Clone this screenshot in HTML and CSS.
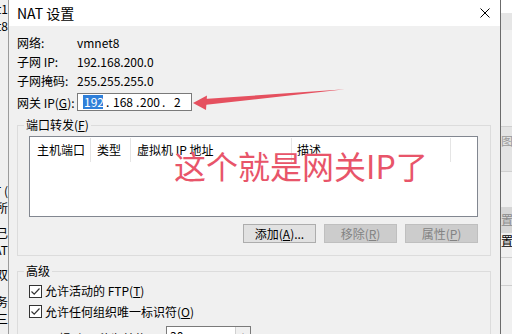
FILE: index.html
```html
<!DOCTYPE html>
<html lang="zh-CN">
<head>
    <meta charset="UTF-8">
    <title>NAT 设置</title>
    <link rel="stylesheet" href="styles.css">
</head>
<body>
    <div class="screen">
        <!-- window behind, left edge -->
        <div class="bg-left">
            <div class="frag top1"><span>vmnet1</span></div>
            <div class="frag"><span>vmnet8</span></div>
            <div class="frag mid1"><span>NAT (</span></div>
            <div class="frag"><span>连接所</span></div>
            <div class="frag mid2"><span>已</span></div>
            <div class="frag"><span>NAT</span></div>
            <div class="frag mid3"><span>双</span></div>
            <div class="frag mid4"><span>务</span></div>
            <div class="frag"><span>三</span></div>
        </div>

        <div class="dialog">
            <div class="titlebar">
                <span class="title">NAT 设置</span>
                <svg class="close" width="10" height="10" viewBox="0 0 10 10">
                    <path d="M0.5 0.5L9.5 9.5M9.5 0.5L0.5 9.5" stroke="#000" stroke-width="1" fill="none"/>
                </svg>
            </div>

            <div class="content">
                <div class="info-row"><span class="label">网络:</span><span>vmnet8</span></div>
                <div class="info-row"><span class="label">子网 IP:</span><span>192.168.200.0</span></div>
                <div class="info-row"><span class="label">子网掩码:</span><span>255.255.255.0</span></div>
                <div class="gw-row">
                    <span class="label">网关 IP(<u>G</u>):</span>
                    <div class="ip-box">
                        <span class="ip-seg sel">192</span>
                        <span class="ip-dot d1">.</span>
                        <span class="ip-seg s2">168</span>
                        <span class="ip-dot d2">.</span>
                        <span class="ip-seg s3">200</span>
                        <span class="ip-dot d3">.</span>
                        <span class="ip-seg s4">2</span>
                    </div>
                </div>

                <fieldset class="group forward">
                    <legend>端口转发(<u>F</u>)</legend>
                    <div class="list">
                        <div class="list-head">
                            <div class="col c1">主机端口</div>
                            <div class="col c2">类型</div>
                            <div class="col c3">虚拟机 IP 地址</div>
                            <div class="col c4">描述</div>
                        </div>
                    </div>
                    <div class="buttons">
                        <button class="btn">添加(<u>A</u>)...</button>
                        <button class="btn disabled">移除(<u>R</u>)</button>
                        <button class="btn disabled">属性(<u>P</u>)</button>
                    </div>
                </fieldset>

                <fieldset class="group advanced">
                    <legend>高级</legend>
                    <div class="check">
                        <span class="box"><svg width="11" height="11" viewBox="0 0 11 11"><path d="M1.5 5.5L4.2 8.2L9.5 2.5" stroke="#333" stroke-width="1.2" fill="none"/></svg></span>
                        <span>允许活动的 FTP(<u>T</u>)</span>
                    </div>
                    <div class="check second">
                        <span class="box"><svg width="11" height="11" viewBox="0 0 11 11"><path d="M1.5 5.5L4.2 8.2L9.5 2.5" stroke="#333" stroke-width="1.2" fill="none"/></svg></span>
                        <span>允许任何组织唯一标识符(<u>O</u>)</span>
                    </div>
                    <div class="udp-row">
                        <span class="udp-label">UDP 超时(以秒为单位)(<u>U</u>):</span>
                        <div class="spin-box">
                            <span>30</span>
                            <span class="spin-btn">▲</span>
                        </div>
                    </div>
                </fieldset>
            </div>
        </div>

        <!-- window behind, right edge -->
        <div class="bg-right">
            <div class="r-white"></div>
            <div class="r-box"></div>
            <div class="r-space"></div>
            <div class="r-field">图络</div>
            <div class="r-space2"></div>
            <div class="r-btn">置(U</div>
            <div class="r-text">置(S</div>
            <div class="r-line"></div>
            <div class="r-line low"></div>
        </div>

        <!-- red annotation drawn over the screenshot -->
        <svg class="arrow" width="512" height="334" viewBox="0 0 512 334">
            <polygon points="345,89.3 204,99 204,105" fill="#e5505f"/>
            <polygon points="193,103 207,95.5 206,110" fill="#e5505f"/>
        </svg>
        <div class="note">这个就是网关IP了</div>
    </div>
</body>
</html>
```

FILE: styles.css
```css
* {
    box-sizing: border-box;
}

body {
    margin: 0;
    width: 512px;
    height: 334px;
    overflow: hidden;
    font-family: "Noto Sans CJK SC", "Liberation Sans", sans-serif;
    font-size: 12px;
    color: #000;
    background: #f0f0f0;
}

.screen {
    display: flex;
    height: 334px;
    position: relative;
    overflow: hidden;
}

/* background window on the left */
.bg-left {
    width: 9px;
    flex-shrink: 0;
    border-right: 1px solid #9c9c9c;
    background: #f0f0f0;
    overflow: hidden;
}

.frag {
    display: flex;
    justify-content: flex-end;
    height: 17px;
    line-height: 17px;
    white-space: nowrap;
    overflow: hidden;
}

.frag.mid1 { margin-top: 148px; }
.frag.mid2 { margin-top: 8px; }
.frag.mid3 { margin-top: 8px; }
.frag.mid4 { margin-top: 10px; }

/* dialog */
.dialog {
    width: 491px;
    flex-shrink: 0;
    background: #f0f0f0;
}

.titlebar {
    height: 26px;
    background: #fff;
    display: flex;
    align-items: center;
    justify-content: space-between;
    padding: 0 10px 0 8px;
}

.title {
    font-size: 14px;
    line-height: 18px;
}

.close {
    display: block;
}

.content {
    padding: 7px 9px 0 8px;
}

.info-row {
    display: flex;
    align-items: center;
    height: 19px;
    line-height: 19px;
}

.label {
    width: 60px;
    flex-shrink: 0;
}

.gw-row {
    display: flex;
    align-items: center;
    height: 18px;
    margin-top: 3px;
}

.ip-box {
    width: 115px;
    height: 18px;
    border: 1px solid #7a7a7a;
    background: #fff;
    display: flex;
    align-items: center;
    padding-left: 5px;
    line-height: 14px;
    white-space: nowrap;
}

.ip-seg,
.ip-dot {
    display: block;
    height: 14px;
    flex-shrink: 0;
}

.ip-seg.sel {
    width: 20px;
    padding-left: 1px;
    background: #2f7fd9;
    color: #fff;
}

.ip-dot.d1 { width: 10px; padding-left: 3px; }
.ip-seg.s2 { width: 22px; }
.ip-dot.d2 { width: 5px; padding-left: 1px; }
.ip-seg.s3 { width: 21px; }
.ip-dot.d3 { width: 9px; padding-left: 1px; }
.ip-seg.s4 { padding-left: 4px; }

/* group boxes */
.group {
    margin: 6px 0 0;
    min-width: 0;
    border: 1px solid #dcdcdc;
    padding: 3px 12px 12px 11px;
}

.group legend {
    padding: 0 2px;
    margin-left: -5px;
    line-height: 16px;
}

.list {
    height: 81px;
    border: 1px solid #828790;
    background: #fff;
}

.list-head {
    display: flex;
    height: 25px;
    margin-top: 1px;
}

.col {
    height: 24px;
    line-height: 24px;
    border-right: 1px solid #e5e5e5;
    white-space: nowrap;
}

.c1 { width: 61px; padding-left: 7px; }
.c2 { width: 40px; padding-left: 6px; }
.c3 { width: 161px; padding-left: 6px; }
.c4 { width: 159px; padding-left: 5px; }

.buttons {
    display: flex;
    justify-content: flex-end;
    gap: 8px;
    margin-top: 7px;
}

.btn {
    width: 73px;
    height: 19px;
    padding: 0;
    border: 1px solid #adadad;
    background: #e1e1e1;
    font-family: inherit;
    font-size: 12px;
    line-height: 16px;
    color: #000;
}

.btn.disabled {
    border-color: #bfbfbf;
    background: #cccccc;
    color: #838383;
}

.advanced {
    margin-top: 7px;
    padding: 2px 0 0 11px;
}

.check {
    display: flex;
    align-items: center;
    gap: 3px;
    height: 20px;
    line-height: 20px;
}

.check.second {
    height: 21px;
}

.box {
    width: 13px;
    height: 13px;
    border: 1px solid #333;
    background: #fff;
    display: flex;
    align-items: center;
    justify-content: center;
}

.udp-row {
    display: flex;
    align-items: flex-start;
    margin-top: 4px;
    padding-left: 2px;
}

.udp-label {
    width: 135px;
    line-height: 20px;
    margin-top: 3px;
    white-space: nowrap;
}

.spin-box {
    width: 85px;
    height: 20px;
    border: 1px solid #7a7a7a;
    background: #fff;
    display: flex;
    justify-content: space-between;
    padding-left: 3px;
    line-height: 18px;
}

.spin-btn {
    width: 15px;
    border-left: 1px solid #d0d0d0;
    background: #f0f0f0;
    font-size: 7px;
    text-align: center;
}

/* background window on the right */
.bg-right {
    flex: 1;
    border-left: 1px solid #6b6b6b;
    background: #f0f0f0;
    overflow: hidden;
    white-space: nowrap;
}

.r-white { height: 13px; background: #fff; }
.r-box { height: 17px; background: #e6e6e6; }
.r-space { height: 96px; }

.r-field {
    height: 46px;
    border-top: 1px solid #d0d0d0;
    border-bottom: 1px solid #d0d0d0;
    background: #e4e4e4;
    color: #9a9a9a;
    padding-top: 6px;
    line-height: 16px;
}

.r-space2 { height: 35px; }

.r-btn {
    height: 26px;
    background: #d6d6d6;
    color: #8a8a8a;
    line-height: 26px;
}

.r-text {
    height: 16px;
    line-height: 16px;
}

.r-line {
    height: 1px;
    margin-top: 8px;
    background: #cfcfcf;
}

.r-line.low {
    margin-top: 27px;
}

/* annotation */
.arrow {
    position: absolute;
    left: 0;
    top: 0;
}

.note {
    position: absolute;
    left: 174px;
    top: 149px;
    font-size: 32px;
    line-height: 32px;
    color: #e8556a;
    white-space: nowrap;
}
```
